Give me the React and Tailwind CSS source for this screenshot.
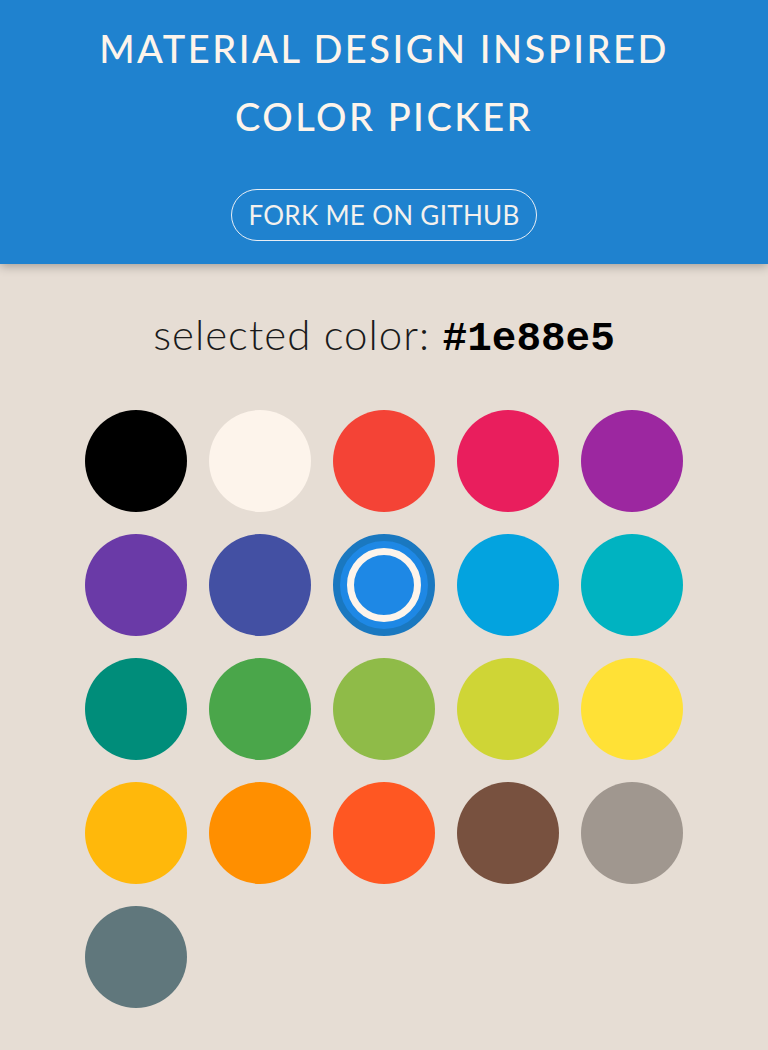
const colors = [
  "#000000", "#fdf4eb", "#f44336", "#e91e5d", "#9c27a0",
  "#6a3aa7", "#4350a3", "#1e88e5", "#03a3df", "#00b3c1",
  "#008d7a", "#4aa64a", "#8fbb48", "#cfd536", "#ffe136",
  "#ffb80b", "#ff8f00", "#ff5722", "#78513f", "#a0978f",
  "#60777c",
];

const selected = "#1e88e5";

function Swatch({ color }) {
  if (color === selected) {
    return (
      <div className="w-[102px] h-[102px] rounded-full border-[7px] border-[#1a78c0] bg-[#1e88e5] p-[7px]">
        <div className="w-full h-full rounded-full border-[7px] border-[#fdf4eb] bg-[#1e88e5]" />
      </div>
    );
  }
  return (
    <div
      className="w-[102px] h-[102px] rounded-full"
      style={{ backgroundColor: color }}
    />
  );
}

export default function App() {
  return (
    <div
      className="min-h-[1050px] bg-[#e6ddd4]"
      style={{ fontFamily: "Lato, 'Open Sans', sans-serif" }}
    >
      <header className="bg-[#1f82cf] pt-[14px] pb-[23px] flex flex-col items-center text-[#fdf4eb] shadow-[0_2px_10px_rgba(0,0,0,0.3)] relative">
        <h1 className="text-[38px] leading-[68px] tracking-[2.5px] font-medium text-center uppercase">
          Material Design Inspired
          <br />
          Color Picker
        </h1>
        <a className="mt-[39px] h-[52px] px-[16px] flex items-center rounded-full border border-[#e8eef5] text-[26px] tracking-[0.3px] text-[#f3f1ee] uppercase">
          Fork me on GitHub
        </a>
      </header>

      <main className="flex flex-col items-center pt-[40px] pb-10">
        <p className="text-[42px] leading-[60px] tracking-[1px] text-[#1a1a1a] font-light">
          selected color:{" "}
          <span
            className="font-bold text-[41px] tracking-normal text-black"
            style={{ fontFamily: "'Liberation Mono', 'Courier New', monospace" }}
          >
            {selected}
          </span>
        </p>

        <div className="mt-[41px] grid grid-cols-5 gap-[22px]">
          {colors.map((c) => (
            <Swatch key={c} color={c} />
          ))}
        </div>
      </main>
    </div>
  );
}
